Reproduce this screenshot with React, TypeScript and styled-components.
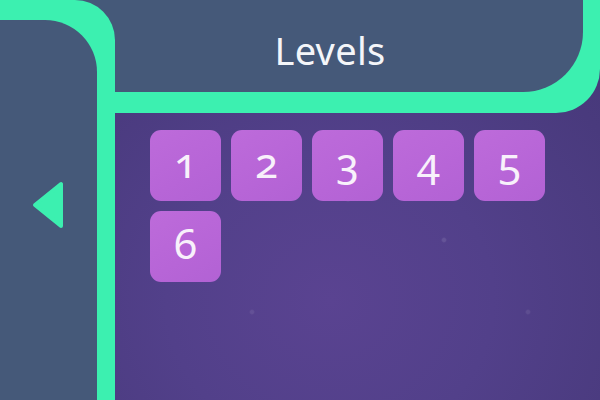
import React from "react";
import styled, { createGlobalStyle } from "styled-components";

const GlobalStyle = createGlobalStyle`
  html, body {
    margin: 0;
    padding: 0;
    background: #4f3b85;
  }
  body {
    font-family: "Noto Sans", "Open Sans", sans-serif;
  }
`;

const Screen = styled.div`
  width: 600px;
  height: 400px;
  overflow: hidden;
  display: grid;
  grid-template-columns: 115px 1fr;
  grid-template-rows: 113px 1fr;
  background:
    radial-gradient(circle at 74% 60%, rgba(255, 255, 255, 0.1) 0 1.5px, transparent 3px),
    radial-gradient(circle at 42% 78%, rgba(255, 255, 255, 0.08) 0 1.5px, transparent 3px),
    radial-gradient(circle at 58% 50%, rgba(255, 255, 255, 0.07) 0 1px, transparent 2.5px),
    radial-gradient(circle at 88% 78%, rgba(255, 255, 255, 0.08) 0 1.5px, transparent 3px),
    radial-gradient(ellipse at 55% 75%, #5a4391 0%, #52408a 35%, #493a7d 70%, #443776 100%);
`;

const HeaderFrame = styled.header`
  grid-row: 1;
  grid-column: 1 / 3;
  display: flex;
  box-sizing: border-box;
  padding: 0 17px 21px 0;
  background: #3cf0b0;
  border-bottom-right-radius: 44px;
`;

const HeaderPanel = styled.div`
  flex: 1;
  display: flex;
  align-items: center;
  justify-content: center;
  padding: 8px 0 0 77px;
  background: #455979;
  border-bottom-right-radius: 60px;
`;

const Title = styled.h1`
  margin: 0;
  font-size: 38px;
  line-height: 1;
  font-weight: 400;
  color: #f4f6f9;
  letter-spacing: 0.3px;
`;

const Sidebar = styled.aside`
  grid-row: 1 / 3;
  grid-column: 1;
  z-index: 1;
  display: flex;
  box-sizing: border-box;
  padding: 20px 18px 0 0;
  background: #3cf0b0;
  border-top-right-radius: 40px;
`;

const SidebarPanel = styled.div`
  flex: 1;
  display: flex;
  align-items: center;
  justify-content: center;
  background: #455979;
  border-top-right-radius: 52px;
`;

const BackButton = styled.button`
  display: flex;
  padding: 0;
  margin: 0 2px 10px 0;
  border: none;
  background: none;
  cursor: pointer;
`;

const Main = styled.main`
  grid-row: 2;
  grid-column: 2;
  padding: 17px 0 0 35px;
`;

const LevelGrid = styled.div`
  display: grid;
  grid-template-columns: repeat(5, 71px);
  grid-auto-rows: 71px;
  gap: 10px;
`;

const LevelTile = styled.button`
  display: flex;
  align-items: center;
  justify-content: center;
  box-sizing: border-box;
  padding: 0 0 7px;
  border: none;
  border-radius: 11px;
  background: linear-gradient(150deg, #bd6bda 0%, #b765d7 60%, #b262d4 100%);
  color: #f8f1fb;
  font-family: "Noto Sans", "Open Sans", sans-serif;
  font-size: 42px;
  line-height: 1;
  font-variant-numeric: oldstyle-nums;
  font-feature-settings: "onum" 1;
  cursor: pointer;
`;

const levels = [1, 2, 3, 4, 5, 6];

const App = () => {
  return (
    <>
      <GlobalStyle />
      <Screen>
        <HeaderFrame>
          <HeaderPanel>
            <Title>Levels</Title>
          </HeaderPanel>
        </HeaderFrame>
        <Sidebar>
          <SidebarPanel>
            <BackButton aria-label="Back">
              <svg width="34" height="50" viewBox="0 0 34 50">
                <path
                  d="M4 25 L30 4 L30 46 Z"
                  fill="#3cf0b0"
                  stroke="#3cf0b0"
                  strokeWidth="4"
                  strokeLinejoin="round"
                />
              </svg>
            </BackButton>
          </SidebarPanel>
        </Sidebar>
        <Main>
          <LevelGrid>
            {levels.map((level) => (
              <LevelTile key={level}>{level}</LevelTile>
            ))}
          </LevelGrid>
        </Main>
      </Screen>
    </>
  );
};

export default App;
